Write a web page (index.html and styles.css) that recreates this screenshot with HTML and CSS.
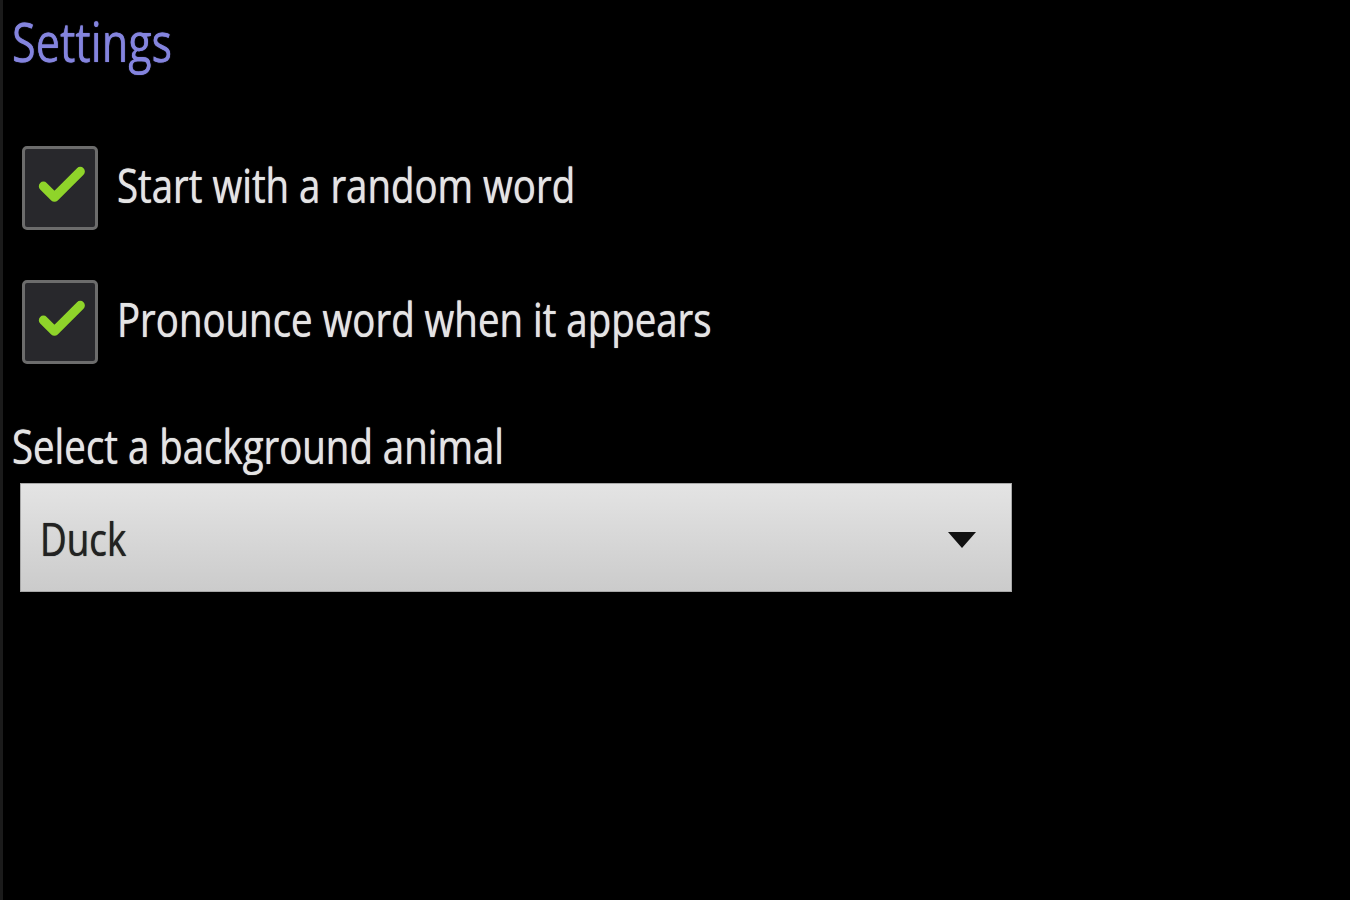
FILE: index.html
```html
<!DOCTYPE html>
<html lang="en">
<head>
<meta charset="utf-8">
<title>Settings</title>
<link rel="stylesheet" href="styles.css">
</head>
<body>
<div class="screen">
  <h1 class="title"><span class="sq">Settings</span></h1>
  <div class="prefs">
    <div class="pref">
      <div class="checkbox">
        <svg class="check" viewBox="0 0 76 84" width="70" height="78"><path d="M20 40 L32 52 L60 24" fill="none" stroke="#8fd42a" stroke-width="10" stroke-linecap="round" stroke-linejoin="round"/></svg>
      </div>
      <span class="pref-text"><span class="sq">Start with a random word</span></span>
    </div>
    <div class="pref">
      <div class="checkbox">
        <svg class="check" viewBox="0 0 76 84" width="70" height="78"><path d="M20 40 L32 52 L60 24" fill="none" stroke="#8fd42a" stroke-width="10" stroke-linecap="round" stroke-linejoin="round"/></svg>
      </div>
      <span class="pref-text"><span class="sq">Pronounce word when it appears</span></span>
    </div>
  </div>
  <div class="label"><span class="sq">Select a background animal</span></div>
  <div class="spinner">
    <span class="spinner-text"><span class="sq">Duck</span></span>
    <svg class="arrow" viewBox="0 0 30 18" width="30" height="18"><path d="M1 1 L29 1 L15 17 Z" fill="#111"/></svg>
  </div>
</div>
</body>
</html>
```
FILE: styles.css
```css
html, body {
  margin: 0;
  padding: 0;
  background: #000;
}
body {
  font-family: "Open Sans", "Noto Sans", sans-serif;
}
.screen {
  width: 1347px;
  height: 900px;
  border-left: 3px solid #1b1b1b;
  display: flex;
  flex-direction: column;
  overflow: hidden;
}
.sq {
  display: inline-block;
  transform: scaleX(0.8);
  transform-origin: left center;
  white-space: nowrap;
  text-shadow: 0 0 1px currentColor;
}
.title {
  margin: 14px 0 0 9px;
  font-size: 54px;
  line-height: 54px;
  font-weight: 400;
  color: #8484de;
}
.prefs {
  margin-top: 78px;
  display: flex;
  flex-direction: column;
  gap: 50px;
}
.pref {
  display: flex;
  align-items: center;
  padding-left: 19px;
  gap: 19px;
}
.checkbox {
  width: 70px;
  height: 78px;
  border: 3px solid #6c6c6c;
  border-radius: 5px;
  background: #28282c;
  flex: none;
}
.check {
  display: block;
}
.pref-text {
  font-size: 48px;
  line-height: 48px;
  color: #e4e4e4;
  margin-bottom: 6px;
}
.label {
  margin: 58px 0 0 9px;
  font-size: 48px;
  line-height: 48px;
  color: #e4e4e4;
}
.spinner {
  margin: 13px 0 0 17px;
  width: 992px;
  height: 109px;
  box-sizing: border-box;
  padding: 0 35px 0 20px;
  display: flex;
  align-items: center;
  justify-content: space-between;
  background: linear-gradient(#e4e4e4, #cbcbcb);
  box-shadow: inset 0 0 0 1px #a8a8a8;
}
.spinner-text {
  font-size: 46px;
  line-height: 46px;
  color: #222;
}
.arrow {
  display: block;
  margin-top: 4px;
}
```
